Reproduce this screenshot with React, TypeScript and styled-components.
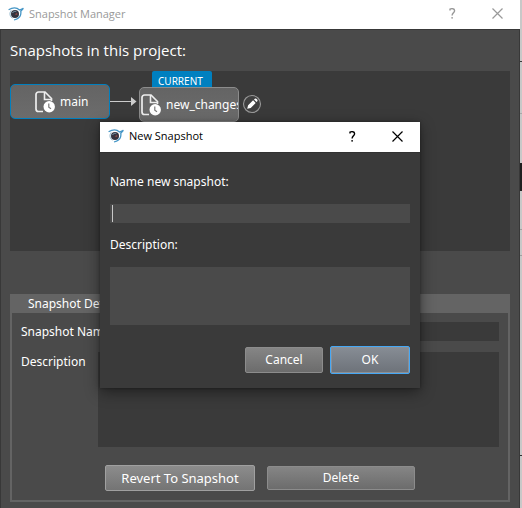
import React from "react";
import styled, { createGlobalStyle, css } from "styled-components";

const GlobalStyle = createGlobalStyle`
  *, *::before, *::after { box-sizing: border-box; }
  body {
    margin: 0;
    background: #4a4a4a;
    color: #fff;
    font: 12px/18px "Noto Sans", "Open Sans", sans-serif;
  }
  button, input, textarea { font: inherit; color: inherit; }
  svg { flex: none; }
`;

const Desktop = styled.div`
  display: grid;
  grid-template-columns: minmax(0, 1fr) 2px;
  min-height: 100vh;
  position: relative;
`;

const Backdrop = styled.div`
  background: linear-gradient(
    #c8c8c8 61px, #3c3c3c 61px 62px, #c8c8c8 62px 113px, #a8a8a8 113px 114px,
    #c8c8c8 114px 163px, #202020 163px 191px, #c8c8c8 191px 229px, #a0a0a0 229px 230px,
    #c8c8c8 230px 255px, #a0a0a0 255px 256px, #c8c8c8 256px 455px, #303030 455px 456px, #c8c8c8 456px
  );
`;

const Window = styled.main`
  display: flex;
  flex-direction: column;
  background: #4a4a4a;
`;

const TitleBar = styled.header<{ $active?: boolean }>`
  display: flex;
  align-items: center;
  height: ${(p) => (p.$active ? 30 : 29)}px;
  padding: 0 0 2px 8px;
  background: #fff;
  color: ${(p) => (p.$active ? "#000" : "#999")};
  font: 11px/16px "Open Sans", sans-serif;
`;

const Title = styled.h1`
  flex: 1;
  margin: 0 0 0 5px;
  font: inherit;
`;

const TitleButton = styled.button`
  display: grid;
  place-items: center;
  width: 45px;
  height: 26px;
  padding: 0;
  border: 0;
  background: none;
`;

const WindowBody = styled.div`
  flex: 1;
  padding: 10px 9px 6px;
  border: 1px solid #383838;
  border-bottom: 0;
`;

const Heading = styled.h2`
  margin: 0 0 11px;
  font: 15px/20px "Open Sans", sans-serif;
`;

const Canvas = styled.section`
  position: relative;
  height: 180px;
  background: #3a3a3a;
`;

const Node = styled.button<{ $x: number; $y: number; $root?: boolean }>`
  position: absolute;
  left: ${(p) => p.$x}px;
  top: ${(p) => p.$y}px;
  display: flex;
  align-items: center;
  gap: 4px;
  width: 100px;
  height: 35px;
  padding: 0 0 0 ${(p) => (p.$root ? 23 : 0)}px;
  overflow: hidden;
  white-space: nowrap;
  border: ${(p) => (p.$root ? "1px solid #0080c0" : "1px solid #8c8c8c")};
  border-radius: 5px;
  background: linear-gradient(#646464, #6c6c6c);
`;

const CurrentBadge = styled.span`
  position: absolute;
  left: 142px;
  top: 0;
  width: 60px;
  height: 18px;
  padding: 2px 0 0 6px;
  border-radius: 2px;
  background: #0080c0;
  font: 10px/16px "Noto Sans", sans-serif;
`;

const Arrow = styled.svg`
  position: absolute;
  left: 100px;
  top: 25px;
`;

const EditButton = styled.button`
  position: absolute;
  left: 232px;
  top: 23px;
  width: 20px;
  height: 20px;
  padding: 0;
  border: 0;
  background: none;
  svg { display: block; }
`;

const Details = styled.section`
  margin-top: 43px;
  border: 2px solid #646464;
  border-top: 0;
`;

const DetailsTitle = styled.h2`
  margin: 0 0 9px;
  padding: 0 16px;
  background: #646464;
  font: 12px/19px "Noto Sans", sans-serif;
`;

const FieldRow = styled.div`
  display: flex;
  gap: 12px;
  padding: 0 9px;
  margin-bottom: 10px;
`;

const FieldLabel = styled.label`
  line-height: 20px;
  white-space: nowrap;
`;

const fieldStyle = css<{ $light?: boolean }>`
  display: block;
  width: 100%;
  min-width: 0;
  padding: 0 2px;
  border: 0;
  border-radius: 0;
  outline: 0;
  resize: none;
  background: ${(p) => (p.$light ? "#4a4a4a" : "#3a3a3a")};
`;

const TextField = styled.input<{ $light?: boolean }>`
  ${fieldStyle}
  height: 19px;

  &:focus:placeholder-shown {
    caret-color: transparent;
    background-image: linear-gradient(#c8c8c8, #c8c8c8);
    background-position: 2px 1px;
    background-size: 1px 17px;
    background-repeat: no-repeat;
  }
`;

const TextBox = styled.textarea<{ $light?: boolean; $height: number }>`
  ${fieldStyle}
  height: ${(p) => p.$height}px;
`;

const Actions = styled.div<{ $end?: boolean }>`
  display: flex;
  align-items: center;
  justify-content: ${(p) => (p.$end ? "flex-end" : "center")};
  gap: ${(p) => (p.$end ? 7 : 12)}px;
  margin-top: ${(p) => (p.$end ? 21 : 18)}px;
  margin-bottom: ${(p) => (p.$end ? 0 : 9)}px;
`;

const Button = styled.button<{ $width: number; $height: number; $tone?: "primary" | "strong" }>`
  width: ${(p) => p.$width}px;
  height: ${(p) => p.$height}px;
  padding: 0;
  border: 1px solid #8c8c8c;
  border-radius: 2px;
  background: linear-gradient(#858585, #6c6c6c);
  ${(p) => p.$tone === "strong" && css`
    border-color: #a0a0a0;
    background: linear-gradient(#8c8c8c, #747474);
    font-size: 13px;
  `}
  ${(p) => p.$tone === "primary" && css`
    border-color: #46a8f5;
    background: linear-gradient(#878d95, #6d7279);
    box-shadow: inset 0 0 0 1px #8b9096;
  `}
`;

const Overlay = styled.div`
  position: absolute;
  inset: 122px 2px auto 0;
  display: flex;
  justify-content: center;
`;

const Dialog = styled.div`
  width: 320px;
  background: #3a3a3a;
  box-shadow: 0 4px 14px rgba(0, 0, 0, 0.45), 0 0 3px rgba(0, 0, 0, 0.35);
`;

const DialogBody = styled.form`
  padding: 19px 10px 14px;
  border-top: 1px solid #323232;
`;

const DialogLabel = styled.label`
  display: block;
  margin-bottom: 12px;
  line-height: 20px;

  input + & {
    margin-top: 12px;
  }
`;

const AppIcon = () => (
  <svg width="16" height="16" viewBox="0 0 16 16" fill="none" aria-hidden="true">
    <circle cx="7" cy="8" r="4" fill="#34343f" />
    <path d="M4.5 7c.7-1.6 2.4-2.1 3.8-1.3" stroke="#7795a8" />
    <path d="M7.5 8.6l1.8-1" stroke="#8a4a48" strokeWidth="1.5" />
    <path d="M.6 3.8C4 1.8 8.5 1.2 11.5 4l3.9-1.7-2.6 3c.5 3.6-1.1 6.4-4.3 7.8L6 14" stroke="#4596c6" strokeWidth="1.3" />
    <path d="M3.2 4.4C1.2 7.1 1.8 10.4 4.3 12.2" stroke="#83afc8" />
  </svg>
);

const CloseIcon = () => (
  <svg width="11" height="11" viewBox="0 0 11 11" aria-hidden="true">
    <path d="M.5.5l10 10M10.5.5l-10 10" stroke="currentColor" strokeWidth="1.2" fill="none" />
  </svg>
);

const HelpIcon = () => (
  <svg width="7" height="11" viewBox="0 0 7 11" aria-hidden="true">
    <path d="M1 2.4V1.2C2.4.4 5.6.3 5.6 2.7c0 1.9-2.5 2.3-2.5 4.8" stroke="currentColor" strokeWidth="1.4" fill="none" />
    <circle cx="3.1" cy="9.8" r=".9" fill="currentColor" />
  </svg>
);

const SnapshotIcon = () => (
  <svg width="22" height="22" viewBox="0 0 22 22" fill="none" aria-hidden="true">
    <path d="M9 20.5H4.5A2.5 2.5 0 0 1 2 18V3.5A2.5 2.5 0 0 1 4.5 1H11l6.5 6.5V10" stroke="#eee" strokeWidth="1.7" />
    <path d="M10.5 1v7.5h7" stroke="#eee" strokeWidth="1.6" />
    <circle cx="15.2" cy="15.7" r="5.7" fill="#fff" />
    <path d="M14.8 12.5v3.7l2.2 1.5" stroke="#777" strokeWidth="1.2" />
  </svg>
);

const PencilIcon = () => (
  <svg width="20" height="20" viewBox="0 0 20 20" fill="none" aria-hidden="true">
    <circle cx="10" cy="10" r="8.5" fill="#404040" stroke="#999" strokeWidth="1.1" />
    <path d="M5.2 14.8l.9-3.5 5-5 2.6 2.6-5 5zM12 5.5l.8-.8c1.2-1 3.5 1.3 2.5 2.5l-.8.8z" fill="#fff" />
  </svg>
);

function WindowTitle({ title, active }: { title: string; active?: boolean }) {
  return (
    <TitleBar $active={active}>
      <AppIcon />
      <Title>{title}</Title>
      <TitleButton type="button" aria-label="Help"><HelpIcon /></TitleButton>
      <TitleButton type="button" aria-label="Close"><CloseIcon /></TitleButton>
    </TitleBar>
  );
}

export default function App() {
  return (
    <Desktop>
      <GlobalStyle />
      <Window>
        <WindowTitle title="Snapshot Manager" />
        <WindowBody>
          <Heading>Snapshots in this project:</Heading>
          <Canvas>
            <Node $x={0} $y={13} $root><SnapshotIcon />main</Node>
            <Arrow width="28" height="12" viewBox="0 0 28 12" aria-hidden="true">
              <path d="M0 5.5h21" stroke="#ccc" />
              <path d="M21 1l5.5 4.5-5.5 4.5z" fill="#ccc" />
            </Arrow>
            <CurrentBadge>CURRENT</CurrentBadge>
            <Node $x={129} $y={16}><SnapshotIcon />new_changes</Node>
            <EditButton aria-label="Edit snapshot"><PencilIcon /></EditButton>
          </Canvas>
          <Details>
            <DetailsTitle>Snapshot Details</DetailsTitle>
            <FieldRow>
              <FieldLabel htmlFor="snapshot-name">Snapshot Name</FieldLabel>
              <TextField id="snapshot-name" />
            </FieldRow>
            <FieldRow>
              <FieldLabel htmlFor="snapshot-description">Description</FieldLabel>
              <TextBox id="snapshot-description" $height={95} />
            </FieldRow>
            <Actions>
              <Button $width={150} $height={26} $tone="strong">Revert To Snapshot</Button>
              <Button $width={148} $height={24}>Delete</Button>
            </Actions>
          </Details>
        </WindowBody>
      </Window>
      <Backdrop />
      <Overlay>
        <Dialog role="dialog" aria-label="New Snapshot">
          <WindowTitle title="New Snapshot" active />
          <DialogBody>
            <DialogLabel htmlFor="new-name">Name new snapshot:</DialogLabel>
            <TextField id="new-name" $light autoFocus placeholder=" " />
            <DialogLabel htmlFor="new-description">Description:</DialogLabel>
            <TextBox id="new-description" $light $height={58} />
            <Actions $end>
              <Button type="button" $width={78} $height={26}>Cancel</Button>
              <Button type="button" $width={80} $height={28} $tone="primary">OK</Button>
            </Actions>
          </DialogBody>
        </Dialog>
      </Overlay>
    </Desktop>
  );
}
